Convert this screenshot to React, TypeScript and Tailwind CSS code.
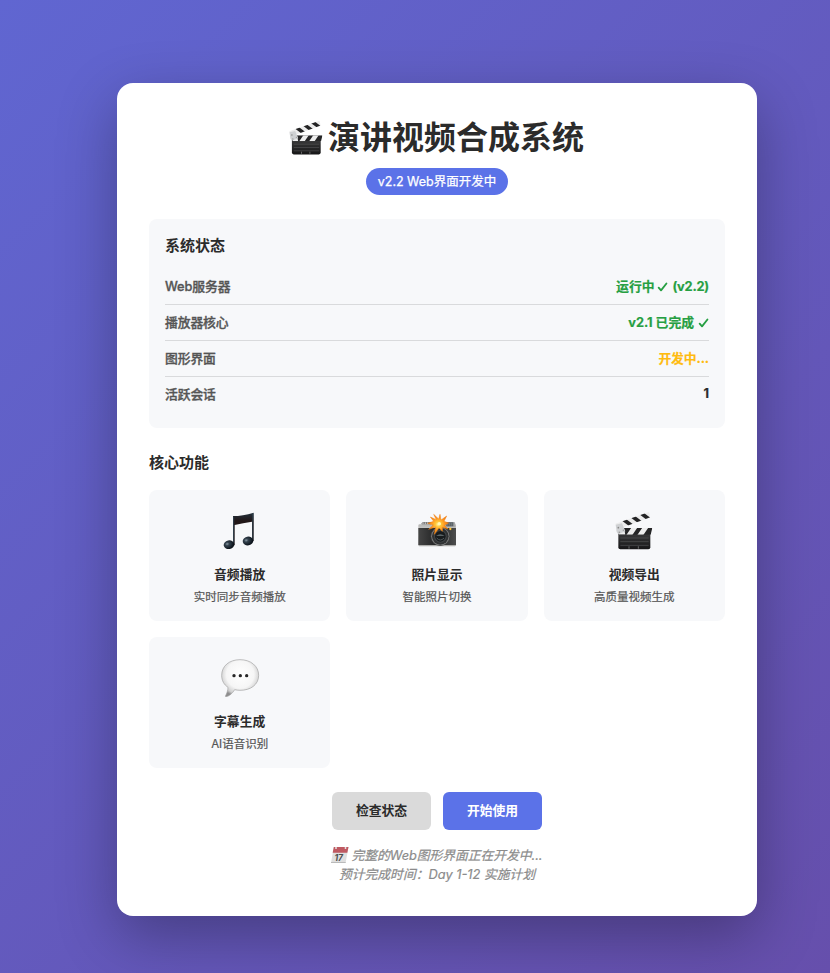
import type { ReactNode } from 'react';

function Clapper({ className }: { className: string }) {
  return (
    <svg viewBox="30 30 120 120" className={className} aria-hidden="true">
      <defs>
        <linearGradient id="clapBody" x1="0" y1="0" x2="0" y2="1">
          <stop offset="0" stopColor="#3a3a3b" />
          <stop offset="1" stopColor="#161617" />
        </linearGradient>
        <clipPath id="clapTop"><path d="M34 71 L135 36 L139 52 L60 81 L40 86 Z" /></clipPath>
        <clipPath id="clapBar"><path d="M45 84 H145 L140 104 H45 Z" /></clipPath>
      </defs>
      <path d="M43 99 H139 V142 Q139 148 133 148 H49 Q43 148 43 142 Z" fill="url(#clapBody)" />
      <g clipPath="url(#clapTop)">
        <rect x="30" y="30" width="120" height="65" fill="#ececec" />
        <path d="M52 61 L66 57 L90 75 L76 79 Z M79 52 L93 48 L117 66 L103 70 Z M106 43 L120 39 L144 57 L130 61 Z" fill="#232324" />
      </g>
      <g clipPath="url(#clapBar)">
        <rect x="43" y="83" width="103" height="22" fill="#252526" />
        <path d="M43 84 H60 L64 104 H43 Z M82 83 H100 L85 105 H67 Z M115 83 H133 L118 105 H100 Z" fill="#ededed" />
      </g>
      <path d="M35 74 L54 70 L64 94 L44 102 Q36 98 37 88 Z" fill="#cfd1d3" />
      <circle cx="43" cy="83" r="2.5" fill="#888" />
      <circle cx="46" cy="97" r="2.5" fill="#999" />
      <circle cx="58" cy="91" r="2.2" fill="#999" />
      <path d="M49 114 H134 M49 125 H134 M49 136 H134" stroke="#555657" strokeWidth="2" />
      <path d="M75 139 V146 M103 139 V146" stroke="#999" strokeWidth="2" />
    </svg>
  );
}

function Music() {
  return (
    <svg viewBox="30 30 120 120" className="size-10" aria-hidden="true">
      <defs>
        <radialGradient id="noteHead" cx="35%" cy="38%" r="65%">
          <stop offset="0" stopColor="#8b9aa5" />
          <stop offset=".3" stopColor="#34424d" />
          <stop offset="1" stopColor="#080e15" />
        </radialGradient>
        <linearGradient id="noteBeam" x1="0" y1="0" x2="0" y2="1">
          <stop offset="0" stopColor="#24313c" />
          <stop offset=".25" stopColor="#211718" />
          <stop offset="1" stopColor="#271b1d" />
        </linearGradient>
      </defs>
      <path d="M69 48 Q98 48 131 38 V123 H126 V65 Q99 69 74 75 V136 H69 Z" fill="url(#noteBeam)" />
      <path d="M71 50 V134 M128.500 40 V122" stroke="#314350" strokeWidth="3" />
      <ellipse cx="57" cy="134" rx="16" ry="13" transform="rotate(-12 57 134)" fill="url(#noteHead)" />
      <ellipse cx="114" cy="123" rx="16" ry="13" transform="rotate(-12 114 123)" fill="url(#noteHead)" />
    </svg>
  );
}

function Camera() {
  return (
    <svg viewBox="33 30 120 120" className="size-10" aria-hidden="true">
      <defs>
        <linearGradient id="camTop" x1="0" y1="0" x2="0" y2="1">
          <stop offset="0" stopColor="#b5b5b3" />
          <stop offset=".5" stopColor="#e5e5e2" />
          <stop offset="1" stopColor="#a9a9a7" />
        </linearGradient>
        <linearGradient id="camBody" x1="0" y1="0" x2="1" y2="0">
          <stop offset="0" stopColor="#454545" />
          <stop offset=".5" stopColor="#202122" />
          <stop offset="1" stopColor="#4d4e4e" />
        </linearGradient>
        <radialGradient id="flash">
          <stop offset="0" stopColor="#fff3a8" />
          <stop offset=".25" stopColor="#ffc93c" />
          <stop offset=".6" stopColor="#ff9a1f" />
          <stop offset="1" stopColor="#ee7412" />
        </radialGradient>
      </defs>
      <path d="M47 70 Q48 66 53 66 H75 V75 H47 Z" fill="#777" />
      <path d="M51 67 V73 M58 67 V73 M65 67 V73" stroke="#ddd" strokeWidth="2.5" />
      <rect x="37" y="73" width="113" height="66" rx="4" fill="url(#camTop)" />
      <path d="M78 66 H144 Q148 66 148 73 V82 H78 Z" fill="#a7a8a8" />
      <rect x="121" y="67" width="21" height="12" rx="1" fill="#596166" />
      <path d="M125 69 V77 M131 69 V77 M137 69 V77" stroke="#8b969b" strokeWidth="1.5" />
      <rect x="37" y="84" width="113" height="51" fill="url(#camBody)" />
      <circle cx="103" cy="109" r="29" fill="#454646" />
      <circle cx="103" cy="109" r="27" fill="#858686" />
      <circle cx="103" cy="109" r="25" fill="#303233" />
      <circle cx="103" cy="109" r="19" fill="#424648" />
      <circle cx="103" cy="109" r="16" fill="#181c1e" />
      <path d="M90 108 Q103 97 116 108 Z" fill="#596265" />
      <path d="M92 114 Q103 126 114 114" fill="none" stroke="#50585a" strokeWidth="3" />
      <circle cx="133" cy="87" r="3.5" fill="#ffc632" />
      <path d="M102 43 L105 60 L122 48 L114 64 L128 69 L115 76 L126 87 L110 82 L109 94 L99 84 L85 103 L89 81 L68 88 L82 75 L65 70 L83 64 L73 51 L91 59 L83 43 L98 57 Z" fill="url(#flash)" stroke="#ef8516" strokeWidth="1.5" />
      <circle cx="100" cy="71" r="5" fill="#fff7b5" />
    </svg>
  );
}

function Bubble() {
  return (
    <svg viewBox="29 27 120 120" className="size-10" aria-hidden="true">
      <defs>
        <radialGradient id="bubbleFill" cx="50%" cy="40%" r="60%">
          <stop offset="0" stopColor="#ffffff" />
          <stop offset=".62" stopColor="#f6f6f6" />
          <stop offset=".88" stopColor="#cfcfcf" />
          <stop offset="1" stopColor="#8d8d8d" />
        </radialGradient>
      </defs>
      <path d="M89 35 C121 35 145 54 145 82 C145 110 121 127 89 127 C83 127 78 126 73 125 C66 136 57 145 46 146 C43 145 53 134 53 118 C41 110 34 98 34 82 C34 54 57 35 89 35 Z" fill="url(#bubbleFill)" stroke="#a2a2a2" strokeWidth="2" />
      <circle cx="71" cy="83" r="5" fill="#272727" />
      <circle cx="90" cy="83" r="5" fill="#272727" />
      <circle cx="109" cy="83" r="5" fill="#272727" />
    </svg>
  );
}

function Calendar() {
  return (
    <svg viewBox="0 0 19 17" className="h-[17px] w-[19px] shrink-0 opacity-80" aria-hidden="true">
      <path d="M3.8 0 H18.5 L15.6 16 H1 Z" fill="#d8d8d8" />
      <path d="M3.8 0 H18.5 L17.3 5.8 H2.7 Z" fill="#b0303a" />
      <path d="M6 0 V2 M15.5 0 V2" stroke="#ddd" strokeWidth="1.5" />
      <path d="M1 15.5 H15.7" stroke="#aaa" />
      <text x="4.500" y="13.6" fontSize="8.5" fontWeight="700" fontStyle="italic" fontFamily="Inter" fill="#222">17</text>
    </svg>
  );
}

function Check() {
  return (
    <svg viewBox="0 0 12 12" className="h-3 w-[11px] shrink-0" fill="none" stroke="currentColor" strokeWidth="2" strokeLinecap="round" strokeLinejoin="round" aria-hidden="true">
      <path d="M1.8 6.7 L4.4 9.7 L10.3 2.2" />
    </svg>
  );
}

function Row({ label, children, color, last }: { label: string; children: ReactNode; color: string; last?: boolean }) {
  return (
    <div className={`flex h-9 justify-between pt-2 text-[12.8px] leading-[19px] ${last ? '' : 'border-b border-[#d9dadc]'}`}>
      <span className="font-medium tracking-[-0.1px] text-[#555] [-webkit-text-stroke:0.35px_#555]">{label}</span>
      <span className={`flex items-center font-bold [-webkit-text-stroke:0.2px_currentColor] ${last ? 'h-[17px]' : 'h-[19px]'} ${color}`}>{children}</span>
    </div>
  );
}

function Feature({ icon, title, text }: { icon: ReactNode; title: string; text: string }) {
  return (
    <div className="flex h-[131px] flex-col items-center rounded-lg bg-[#f7f8fa] pt-5">
      {icon}
      <h3 className="mt-[15px] text-[12.8px] leading-[19px] font-bold">{title}</h3>
      <p className="mt-[5px] text-[11.5px] leading-[17px] text-[#555] [-webkit-text-stroke:0.2px_#555]">{text}</p>
    </div>
  );
}

export default function App() {
  return (
    <div className="h-[973px] w-[830px] overflow-hidden bg-[linear-gradient(135deg,#6066d1_0%,#664fac_100%)] pt-[83px] pl-[117px] font-['Inter','Noto_Sans_CJK_SC',sans-serif] text-[#2b2b2b]">
      <main className="h-[833px] w-[640px] rounded-2xl bg-white px-8 pt-8 shadow-[0_20px_60px_rgba(0,0,0,0.3)]">
        <header className="flex flex-col items-center">
          <h1 className="flex h-[45px] items-center text-[32px] leading-[45px] font-bold">
            <Clapper className="mr-[4px] mb-[2px] size-9" />
            <span className="mr-[2px]">演讲视频合成系统</span>
          </h1>
          <div className="mt-2 flex h-[27px] w-[142px] items-center justify-center rounded-full bg-[#5b72e8] pt-0.5 text-[12.5px] whitespace-nowrap text-white [-webkit-text-stroke:0.25px_white]">v2.2 Web界面开发中</div>
        </header>

        <section className="mt-6 h-[209px] rounded-lg bg-[#f7f8fa] px-4 pt-4">
          <h2 className="h-[37px] pb-3 text-[15px] leading-[21px] font-bold">系统状态</h2>
          <div className="-mt-[3px]">
            <Row label="Web服务器" color="text-[#269f42]"><span>运行中</span><span className="mr-[4px] ml-[3px] flex"><Check /></span><span className="tracking-[-0.2px]">(v2.2)</span></Row>
            <Row label="播放器核心" color="text-[#269f42]"><span>v2.1 已完成</span><span className="ml-[4px] flex"><Check /></span></Row>
            <Row label="图形界面" color="text-[#ffbb0f]"><span className="tracking-[-0.1px]">开发中...</span></Row>
            <Row label="活跃会话" color="text-[#2b2b2b]" last>1</Row>
          </div>
        </section>

        <h2 className="mt-6 h-[38px] text-[15px] leading-[22px] font-bold">核心功能</h2>
        <section className="grid grid-cols-3 gap-4">
          <Feature icon={<Music />} title="音频播放" text="实时同步音频播放" />
          <Feature icon={<Camera />} title="照片显示" text="智能照片切换" />
          <Feature icon={<Clapper className="size-10" />} title="视频导出" text="高质量视频生成" />
          <Feature icon={<Bubble />} title="字幕生成" text="AI语音识别" />
        </section>

        <div className="mt-6 flex justify-center gap-3 text-[12.8px] font-bold">
          <button className="h-[38px] w-[99px] rounded-md bg-[#dadada]">检查状态</button>
          <button className="h-[38px] w-[99px] rounded-md bg-[#5b72e8] text-white">开始使用</button>
        </div>

        <footer className="mt-4 flex flex-col items-center text-[12.8px] leading-[19px] text-[#8b8b8b] italic [-webkit-text-stroke:0.2px_#8b8b8b]">
          <p className="flex h-[19px] items-center gap-[3px] pr-[2px] tracking-[-0.05px]"><Calendar /><span>完整的Web图形界面正在开发中...</span></p>
          <p className="h-[19px]">预计完成时间：Day 1-12 实施计划</p>
        </footer>
      </main>
    </div>
  );
}
